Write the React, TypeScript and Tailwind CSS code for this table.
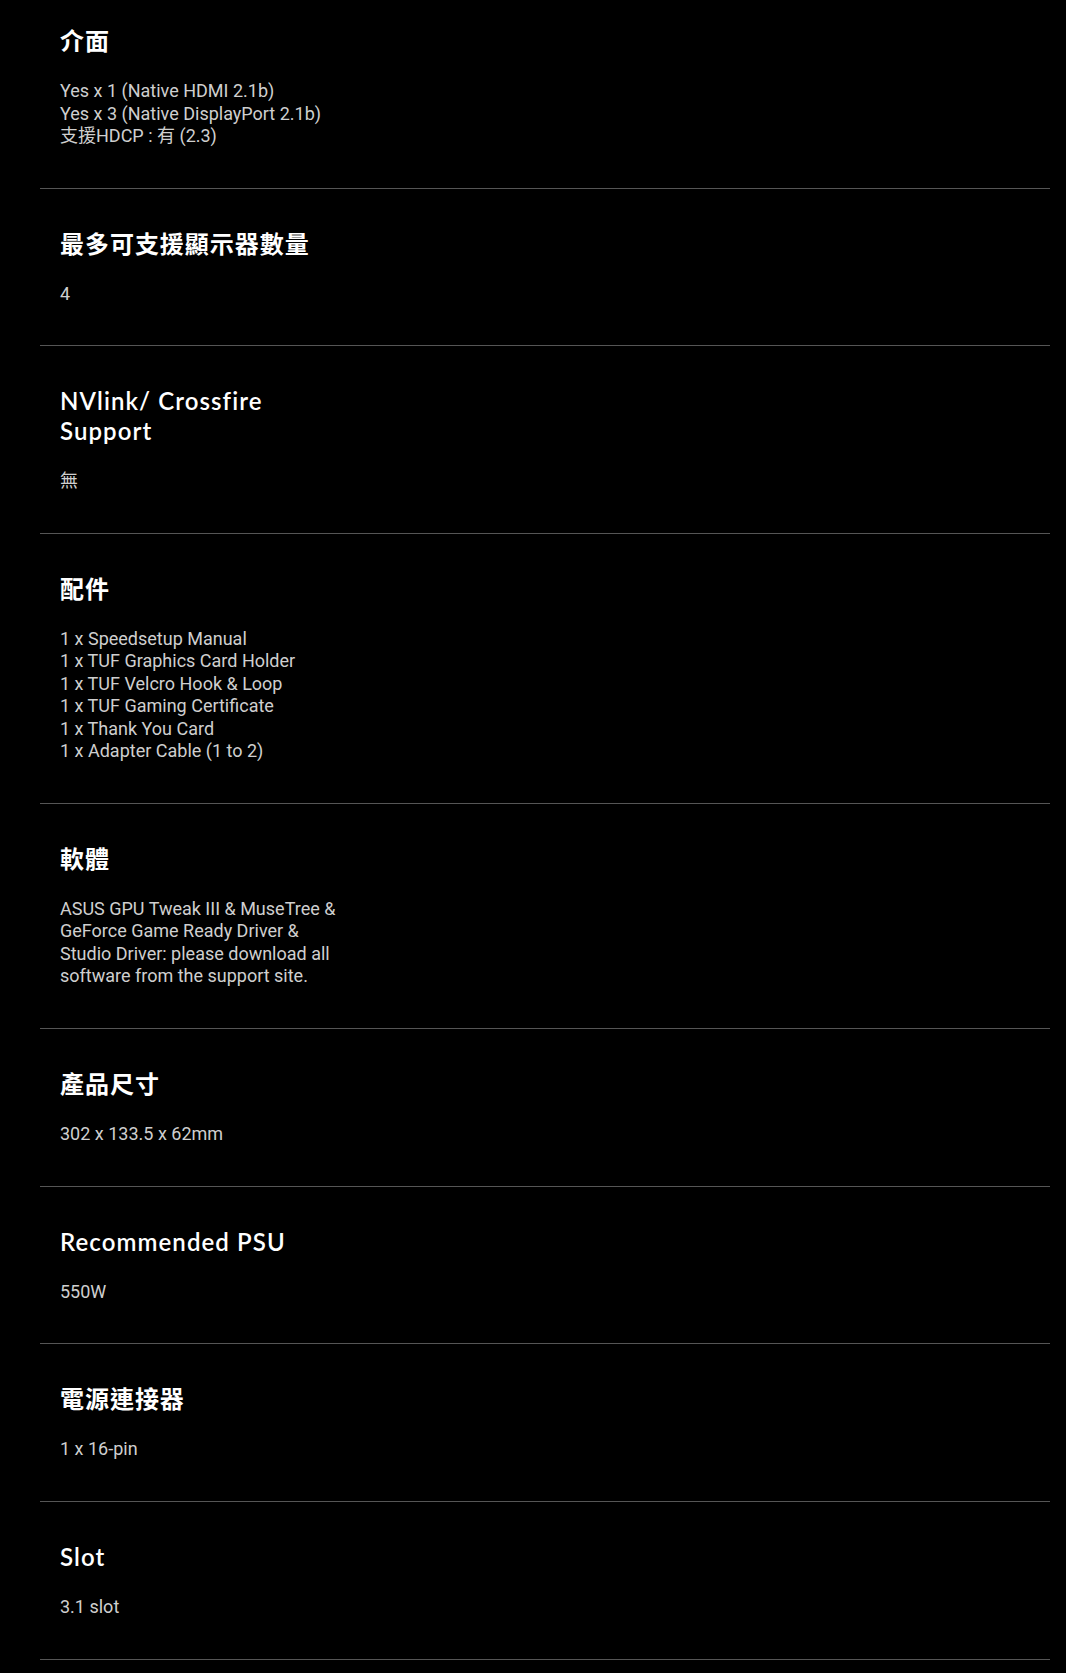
const specs: { title: string; lines: string[] }[] = [
  {
    title: "介面",
    lines: ["Yes x 1 (Native HDMI 2.1b)", "Yes x 3 (Native DisplayPort 2.1b)", "支援HDCP : 有 (2.3)"],
  },
  { title: "最多可支援顯示器數量", lines: ["4"] },
  { title: "NVlink/ Crossfire Support", lines: ["無"] },
  {
    title: "配件",
    lines: [
      "1 x Speedsetup Manual",
      "1 x TUF Graphics Card Holder",
      "1 x TUF Velcro Hook & Loop",
      "1 x TUF Gaming Certificate",
      "1 x Thank You Card",
      "1 x Adapter Cable (1 to 2)",
    ],
  },
  {
    title: "軟體",
    lines: [
      "ASUS GPU Tweak III & MuseTree & GeForce Game Ready Driver & Studio Driver: please download all software from the support site.",
    ],
  },
  { title: "產品尺寸", lines: ["302 x 133.5 x 62mm"] },
  { title: "Recommended PSU", lines: ["550W"] },
  { title: "電源連接器", lines: ["1 x 16-pin"] },
  { title: "Slot", lines: ["3.1 slot"] },
];

const hasCjk = (s: string) => /[\u3400-\u9fff]/.test(s);

const SpecRow = ({ title, lines, first }: { title: string; lines: string[]; first?: boolean }) => (
  <div className={first ? "pt-[26px] pb-10 border-b border-[#555]" : "pt-10 pb-[40.15px] border-b border-[#555]"}>
    <div className="w-[280px] ml-5">
      <h3
        className={
          hasCjk(title)
            ? "text-[24px] leading-[30px] font-bold tracking-[0.04em] text-white [font-family:Lato,'Noto_Sans_CJK_TC',sans-serif]"
            : "text-[24px] leading-[30px] font-semibold tracking-[0.045em] text-white [font-family:Lato,'Noto_Sans_CJK_TC',sans-serif]"
        }
      >
        {title}
      </h3>
      <div className="mt-6 text-[18px] leading-[22.5px] text-[#cfcfcf] [font-family:Roboto,'Noto_Sans_CJK_TC',sans-serif]">
        {lines.map((l) => (
          <p key={l}>{l}</p>
        ))}
      </div>
    </div>
  </div>
);

export default function App() {
  return (
    <div className="min-h-[1673px] bg-black">
      <div className="ml-10 w-[1010px]">
        {specs.map((s, i) => (
          <SpecRow key={s.title} title={s.title} lines={s.lines} first={i === 0} />
        ))}
      </div>
    </div>
  );
}
